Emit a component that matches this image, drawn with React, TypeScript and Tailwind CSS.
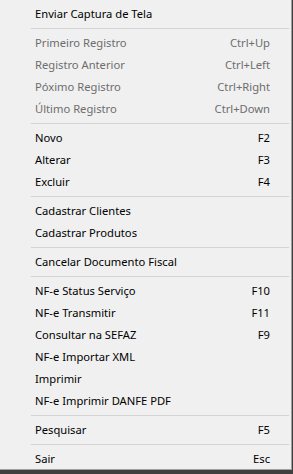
type Item = { label: string; shortcut?: string; disabled?: boolean } | "sep";

const items: Item[] = [
  { label: "Enviar Captura de Tela" },
  "sep",
  { label: "Primeiro Registro", shortcut: "Ctrl+Up", disabled: true },
  { label: "Registro Anterior", shortcut: "Ctrl+Left", disabled: true },
  { label: "Póximo Registro", shortcut: "Ctrl+Right", disabled: true },
  { label: "Último Registro", shortcut: "Ctrl+Down", disabled: true },
  "sep",
  { label: "Novo", shortcut: "F2" },
  { label: "Alterar", shortcut: "F3" },
  { label: "Excluir", shortcut: "F4" },
  "sep",
  { label: "Cadastrar Clientes" },
  { label: "Cadastrar Produtos" },
  "sep",
  { label: "Cancelar Documento Fiscal" },
  "sep",
  { label: "NF-e Status Serviço", shortcut: "F10" },
  { label: "NF-e Transmitir", shortcut: "F11" },
  { label: "Consultar na SEFAZ", shortcut: "F9" },
  { label: "NF-e Importar XML" },
  { label: "Imprimir" },
  { label: "NF-e Imprimir DANFE PDF" },
  "sep",
  { label: "Pesquisar", shortcut: "F5" },
  "sep",
  { label: "Sair", shortcut: "Esc" },
];

export default function App() {
  return (
    <div
      className="w-[293px] h-[474px] bg-[#3f3f3f] overflow-hidden"
      style={{ fontFamily: '"Noto Sans", "Open Sans", sans-serif' }}
    >
      <div className="w-[292px] h-[470px] bg-[#f0f0f0] border-r border-b border-[#a0a0a0] pt-[3px] text-[11.2px]">
        {items.map((item, i) =>
          item === "sep" ? (
            <div key={i} className="h-[7px] flex items-center pl-[31px] pr-[2px]">
              <div className="h-px w-full bg-[#d4d4d4]" />
            </div>
          ) : (
            <div
              key={i}
              className={`h-[22px] flex items-center justify-between pl-[35px] pr-[21px] ${
                item.disabled ? "text-[#6d6d6d]" : "text-black"
              }`}
            >
              <span>{item.label}</span>
              {item.shortcut && <span>{item.shortcut}</span>}
            </div>
          )
        )}
      </div>
    </div>
  );
}
